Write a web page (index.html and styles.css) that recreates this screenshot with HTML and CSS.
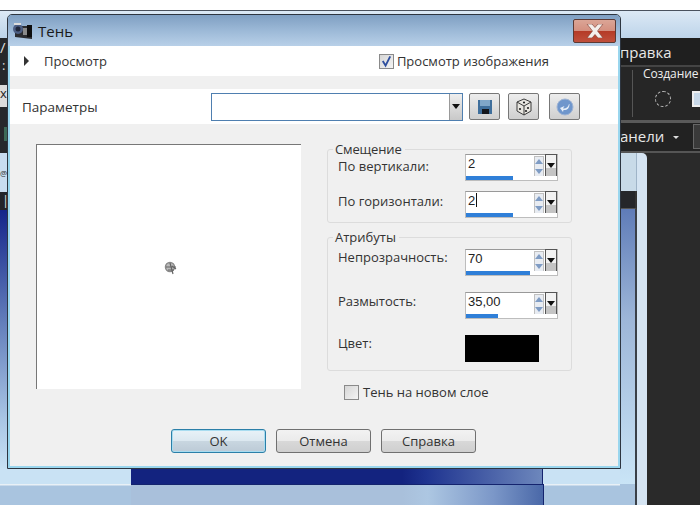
FILE: index.html
```html
<!DOCTYPE html>
<html lang="ru">
<head>
<meta charset="utf-8">
<title>Тень</title>
<link rel="stylesheet" href="styles.css">
</head>
<body>
<div class="desktop">
  <div class="bg-top"></div>
  <div class="bg-left">
    <span class="l-light"></span>
    <span class="l-dark">/</span>
    <span class="l-dark2">:</span>
    <span class="l-x">x</span>
    <span class="l-dark3"><i class="l-green"></i></span>
    <span class="l-at">@</span>
    <span class="l-bar">|</span>
    <span class="l-blue"></span>
  </div>
  <div class="bg-app">
    <div class="app-menu">правка</div>
    <div class="app-tools">
      <span class="app-sep"></span>
      <div class="app-create">Создание
        <div class="app-icons"><span class="dot-ring"></span><span class="mini-ico"></span></div>
      </div>
    </div>
    <div class="app-panels">анели<span class="app-caret"></span><span class="app-btn"></span></div>
  </div>
  <div class="bg-inner">
    <div class="inner-tab">
      <div class="inner-head"></div>
      <div class="inner-ticks"></div>
      <div class="inner-blue"></div>
      <div class="inner-low"></div>
    </div>
  </div>
  <div class="bg-bottom"><div class="navy"></div><div class="navy-low"></div></div>

  <div class="dialog">
    <div class="titlebar">
      <svg class="title-ico" viewBox="0 0 20 18" width="20" height="18"><path d="M3 4h17v13L3 15z" fill="#2b2c30"/><circle cx="6" cy="7" r="5" fill="#4d5f84"/><circle cx="6" cy="7" r="2.500" fill="#20283c"/><rect x="11" y="6" width="5" height="7" fill="#8a8a8a"/><rect x="15" y="3" width="5" height="12" fill="#0e0e0e"/><path d="M2 1h7v2H2z" fill="#ddd"/></svg>
      <span class="title-text">Тень</span>
      <div class="close-btn"><svg viewBox="0 0 18 14" width="18" height="14"><path d="M1 0h5l3 3.500L12 0h5l-5.500 7L17 14h-5l-3-3.500L6 14H1l5.500-7z" fill="#f4efec" stroke="#7a3a30" stroke-width=".6"/></svg></div>
    </div>
    <div class="preview-row">
      <span class="tri"></span>
      <span class="preview-label">Просмотр</span>
      <label class="check top-check"><span class="box checked"><svg viewBox="0 0 14 14" width="14" height="14"><path d="M3 7l3 5 5-10" fill="none" stroke="#2f4f9f" stroke-width="2"/></svg></span>Просмотр изображения</label>
    </div>
    <div class="params-row">
      <span class="params-label">Параметры</span>
      <div class="combo"><span class="combo-arrow"><i class="down"></i></span></div>
      <span class="tool"><svg viewBox="0 0 16 16" width="16" height="16"><path d="M1 1h14v14H1z" fill="#3f6f9c"/><rect x="3" y="1" width="10" height="6" fill="#7fa6c8"/><rect x="5" y="10" width="7" height="5" fill="#14161c"/></svg></span>
      <span class="tool t2"><svg viewBox="0 0 18 18" width="18" height="18"><path d="M9 1l7 3v9l-7 4-7-4V4z" fill="#e8e6e0" stroke="#3a3a3a"/><path d="M2 4l7 4 7-4M9 8v9" fill="none" stroke="#3a3a3a"/><circle cx="5" cy="11" r="1.100" fill="#222"/><circle cx="13" cy="10" r="1.100" fill="#222"/><circle cx="11" cy="13" r="1.100" fill="#222"/><circle cx="9" cy="4.500" r="1.100" fill="#222"/></svg></span>
      <span class="tool t3"><svg viewBox="0 0 18 18" width="18" height="18"><circle cx="9" cy="9" r="8" fill="#6f96cc" stroke="#9fb4d4"/><path d="M13 6c-1 4-4 5-6 4.500L8.500 8 4 10l3 4 .5-2c3 .5 6-1 6-6z" fill="#e6eef8"/></svg></span>
    </div>
    <div class="body">
      <div class="preview-box"><svg class="cursor" viewBox="0 0 16 16" width="16" height="16"><circle cx="7" cy="7" r="4.500" fill="#bbb" stroke="#8a8a8a" stroke-width="1.500"/><path d="M3 7h10M7 3l3 11M9 6l4 3M5 10h6" stroke="#666" stroke-width="1.200"/></svg></div>
      <div class="side">
        <fieldset class="group g1">
          <legend>Смещение</legend>
          <div class="field">
            <span class="lbl">По вертикали:</span>
            <div class="spin"><div class="spin-top"><span class="val">2</span><span class="arrows"><i class="au"></i><i class="ad"></i></span><span class="drop"><i class="down"></i></span></div><div class="track"><div class="fill" style="width:52%"></div></div></div>
          </div>
          <div class="field">
            <span class="lbl">По горизонтали:</span>
            <div class="spin"><div class="spin-top"><span class="val caret">2</span><span class="arrows"><i class="au"></i><i class="ad"></i></span><span class="drop"><i class="down"></i></span></div><div class="track"><div class="fill" style="width:52%"></div></div></div>
          </div>
        </fieldset>
        <fieldset class="group g2">
          <legend>Атрибуты</legend>
          <div class="field">
            <span class="lbl">Непрозрачность:</span>
            <div class="spin"><div class="spin-top"><span class="val">70</span><span class="arrows"><i class="au"></i><i class="ad"></i></span><span class="drop"><i class="down"></i></span></div><div class="track"><div class="fill" style="width:70%"></div></div></div>
          </div>
          <div class="field">
            <span class="lbl">Размытость:</span>
            <div class="spin"><div class="spin-top"><span class="val">35,00</span><span class="arrows"><i class="au"></i><i class="ad"></i></span><span class="drop"><i class="down"></i></span></div><div class="track"><div class="fill" style="width:35%"></div></div></div>
          </div>
          <div class="field color-field">
            <span class="lbl">Цвет:</span>
            <div class="swatch"></div>
          </div>
        </fieldset>
        <label class="check layer-check"><span class="box"></span>Тень на новом слое</label>
      </div>
    </div>
    <div class="actions">
      <button class="btn default">OK</button>
      <button class="btn">Отмена</button>
      <button class="btn">Справка</button>
    </div>
  </div>
</div>
</body>
</html>
```

FILE: styles.css
```css
* { box-sizing: border-box; }
html, body { margin: 0; padding: 0; }
body { width: 700px; height: 505px; overflow: hidden; font-family: "Open Sans", "Noto Sans", "Liberation Sans", sans-serif; color: #222; }

.desktop { position: relative; width: 700px; height: 505px; background: #fff; overflow: hidden; }

.bg-top { position: absolute; left: 0; top: 10px; width: 700px; height: 28px; border-top: 1px solid #4a525e; background: linear-gradient(180deg, #dce9f5, #bdd4ea); }

.bg-left { position: absolute; left: 0; top: 11px; width: 8px; height: 459px; display: flex; flex-direction: column; overflow: hidden; font-size: 13px; line-height: 16px; color: #ddd; }
.bg-left span { display: block; flex: none; white-space: nowrap; }
.l-light { height: 27px; }
.l-dark { height: 19px; background: #26282c; font-size: 15px; line-height: 18px; }
.l-dark2 { height: 28px; background: #26282c; padding-left: 2px; }
.l-x { height: 22px; background: #dcdcdc; color: #222; }
.l-dark3 { height: 46px; background: #26282c; position: relative; padding-top: 20px; }
.l-green { display: block; width: 4px; height: 14px; margin-left: 4px; background: #3c6a58; }
.l-at { height: 39px; background: #c8dcf0; color: #333; padding-top: 12px; font-size: 8px; }
.l-bar { height: 18px; background: #22242a; padding-left: 2px; }
.l-blue { height: 260px; background: linear-gradient(180deg, #15258a 0, #5d78b8 40%, #a8c4e4 80%, #c8e2f4 100%); }

.bg-app { position: absolute; left: 620px; top: 38px; width: 80px; height: 115px; background: #1f1f1f; color: #e8e8e8; }
.app-menu { height: 29px; font-size: 15px; line-height: 29px; border-bottom: 2px solid #444; white-space: nowrap; }
.app-tools { height: 56px; position: relative; border-bottom: 3px solid #5a5a5a; background: #262626; display: flex; }
.app-sep { position: absolute; left: 12px; top: 3px; width: 1px; height: 47px; background: #555; }
.app-create { margin-left: 23px; font-size: 12px; line-height: 14px; white-space: nowrap; color: #eee; width: 57px; overflow: visible; letter-spacing: -.1px; }
.app-icons { display: flex; align-items: center; gap: 21px; margin-top: 10px; margin-left: 12px; }
.dot-ring { width: 16px; height: 16px; border-radius: 50%; border: 1px dashed #bbb; display: block; flex: none; }
.mini-ico { width: 8px; height: 16px; background: #c8d8e8; border: 2px solid #eee; border-right: 0; display: block; flex: none; }
.app-panels { height: 30px; font-size: 15px; line-height: 27px; background: #222; white-space: nowrap; position: relative; border-bottom: 2px solid #555; }
.app-caret { display: inline-block; margin-left: 9px; margin-bottom: 3px; border-left: 3px solid transparent; border-right: 3px solid transparent; border-top: 3px solid #ddd; }
.app-btn { position: absolute; left: 73px; top: 1px; width: 10px; height: 25px; background: #3a3a3a; border: 1px solid #666; }

.bg-inner { position: absolute; left: 620px; top: 153px; width: 80px; height: 352px; background: #2a2a2a; }
.inner-tab { width: 27px; height: 352px; border-radius: 0 5px 0 0; background: #d5e4f2; position: relative; overflow: hidden; display: flex; flex-direction: column; padding-right: 10px; }
.inner-head { height: 38px; flex: none; background: #c8dae8; border-right: 1px solid #9fb4c8; }
.inner-ticks { height: 18px; flex: none; background: #25262a; border-right: 2px solid #333; border-bottom: 1px solid #555; }
.inner-blue { flex: 1; background: linear-gradient(180deg, #5f7cb8 0, #9db6d8 40%, #c9e4f6 100%); border-right: 2px solid #3a4048; }
.inner-low { height: 21px; flex: none; background: #a9c4df; border-right: 2px solid #3a4048; }

.bg-bottom { position: absolute; left: 0; top: 468px; width: 620px; height: 37px; background: linear-gradient(180deg, #c9e2f4 0, #c9e2f4 16px, #e8f0f6 16px, #e8f0f6 17px, #a9c4df 18px, #a9c4df 100%); }
.navy { position: absolute; left: 131px; top: 0; width: 412px; height: 16px; background: linear-gradient(90deg, #13237f 0, #13237f 66%, #1f3490 72%, #6d87bc 100%); border-right: 1px solid #14246e; }
.navy-low { position: absolute; left: 131px; top: 16px; width: 413px; height: 21px; background: linear-gradient(90deg, #a9c0db 0, #a9c0db 66%, #adc7e2 72%, #7b97c8 88%, #4a68a8 100%); border-top: 1px solid #14246e; border-right: 1px solid #14246e; }

.dialog { position: absolute; left: 7px; top: 14px; width: 614px; height: 455px; border: 1px solid #2d3540; border-radius: 5px 5px 0 0; background: #f0f0f0; display: flex; flex-direction: column; padding: 0 2px 2px; box-shadow: inset 0 0 0 2px #9ad6ee; }
.titlebar { height: 31px; margin: 0 -2px; padding-left: 4px; display: flex; align-items: center; gap: 6px; border-radius: 4px 4px 0 0; background: linear-gradient(180deg, #7f9fc2 0, #9cb9d7 50%, #b8d0e8 100%); flex: none; position: relative; }
.title-ico { flex: none; }
.title-text { font-size: 15px; color: #1a1a1a; }
.close-btn { position: absolute; right: 4px; top: 4px; width: 43px; height: 24px; border: 1px solid #5c3a34; border-radius: 2px; background: linear-gradient(180deg, #dba596 0, #d49080 48%, #b53b27 52%, #c0503c 100%); display: flex; align-items: center; justify-content: center; }

.preview-row { height: 30px; background: #fff; display: flex; align-items: center; padding-left: 14px; flex: none; position: relative; font-size: 13px; }
.tri { width: 0; height: 0; border-left: 5px solid #333; border-top: 5px solid transparent; border-bottom: 5px solid transparent; margin-top: -1px; }
.preview-label { margin-left: 15px; color: #333; margin-top: -1px; }
.top-check { margin-left: 272px; }

.check { display: flex; align-items: center; gap: 3px; font-size: 13px; color: #333; white-space: nowrap; }
.box { width: 15px; height: 15px; border: 1px solid #8a8a8a; background: linear-gradient(135deg, #d6d6d6, #f4f4f4); display: flex; align-items: center; justify-content: center; flex: none; }

.params-row { height: 35px; margin-top: 13px; background: #fff; display: flex; align-items: center; padding-left: 12px; flex: none; font-size: 13.500px; }
.params-label { width: 189px; color: #333; padding-top: 1px; }
.combo { width: 252px; height: 28px; border: 1px solid #4f7fb0; background: #fff; display: flex; justify-content: flex-end; }
.combo-arrow { width: 13px; background: linear-gradient(180deg, #eee, #c8c8c8); border-left: 1px solid #999; display: flex; align-items: center; justify-content: center; }
.down { display: block; width: 0; height: 0; border-left: 4px solid transparent; border-right: 4px solid transparent; border-top: 5px solid #111; }
.tool { width: 31px; height: 27px; margin-left: 8px; border: 1px solid #777; border-radius: 2px; background: linear-gradient(180deg, #ededed, #cfcfcf); display: flex; align-items: center; justify-content: center; flex: none; }
.params-row .combo + .tool { margin-left: 6px; }
.tool.t3 { margin-left: 10px; }

.body { flex: 1; display: flex; padding: 20px 0 0 26px; min-height: 0; }
.preview-box { width: 265px; height: 245px; background: #fff; border-top: 1px solid #777; border-left: 1px solid #777; display: flex; align-items: center; justify-content: center; flex: none; }
.cursor { margin-left: 4px; margin-top: 2px; }
.side { margin-left: 26px; width: 245px; display: flex; flex-direction: column; }

.group { margin: 0; padding: 0; border: 1px solid #dcdcdc; border-radius: 3px; position: relative; width: 245px; }
.group legend { font-size: 13px; margin-left: 5px; padding: 0 3px 0 2px; color: #333; line-height: 12px; }
.g1 legend { letter-spacing: -.15px; }
.g1 { height: 80px; margin-top: -1px; }
.g2 { height: 140px; margin-top: 8px; }
.field { display: flex; align-items: flex-start; padding-left: 10px; position: relative; }
.lbl { width: 127px; font-size: 13px; color: #333; line-height: 17px; padding-top: 3px; flex: none; white-space: nowrap; }
.g1 .field { height: 37px; }
.g1 .field:first-of-type { margin-top: -1px; }
.g1 .field:first-of-type .lbl { padding-top: 4px; }
.g1 .field:last-of-type .lbl { padding-top: 2px; }
.g2 .field { height: 43px; }
.g2 .field:first-of-type { margin-top: 6px; }
.g2 .lbl { padding-top: 0; }
.g2 .field:nth-of-type(2) .lbl { padding-top: 1px; }
.spin { width: 93px; height: 27px; border: 1px solid #bdbdbd; border-top-color: #999; background: #fff; display: flex; flex-direction: column; }
.spin-top { flex: 1; display: flex; align-items: flex-start; min-height: 0; }
.val { flex: 1; font-size: 13px; line-height: 18px; padding: 0 0 0 2px; color: #222; font-family: "Liberation Sans", sans-serif; }
.caret::after { content: ""; display: inline-block; width: 1px; height: 14px; background: #111; margin-left: 1px; vertical-align: -2px; }
.arrows { width: 10px; height: 21px; display: flex; flex-direction: column; border: 1px solid #c0c0c0; background: #e8ecf2; margin-top: 1px; flex: none; align-items: center; justify-content: space-around; }
.au { display: block; width: 0; height: 0; border-left: 4px solid transparent; border-right: 4px solid transparent; border-bottom: 5px solid #7f9cc4; }
.ad { display: block; width: 0; height: 0; border-left: 4px solid transparent; border-right: 4px solid transparent; border-top: 5px solid #7f9cc4; }
.drop { width: 12px; height: 24px; margin: -1px 0 0 1px; padding-top: 8px; border: 1px solid #555; background: linear-gradient(180deg, #f2f2f2 0, #f2f2f2 58%, #c4c4c4 58%); display: flex; justify-content: center; flex: none; }
.track { height: 4px; background: #fff; flex: none; }
.fill { height: 4px; background: #2f7fd8; }
.swatch { width: 74px; height: 27px; background: #000; }
.layer-check { margin: 12px 0 0 17px; gap: 4px; }

.actions { height: 24px; flex: none; margin-bottom: 13px; display: flex; gap: 10px; padding-left: 161px; align-items: flex-start; }
.btn { width: 95px; height: 24px; border: 1px solid #707070; border-radius: 3px; background: linear-gradient(180deg, #f2f2f2 0, #ebebeb 48%, #d8d8d8 52%, #cfcfcf 100%); font: 13px "Open Sans", "Noto Sans", sans-serif; color: #333; padding: 0; }
.btn.default { border: 1px solid #2b7fa8; background: linear-gradient(180deg, #e8f2f8 0, #dce8f0 48%, #c8d6e0 52%, #bccad6 100%); box-shadow: inset 0 0 0 1px #a8dcf0; }
```
